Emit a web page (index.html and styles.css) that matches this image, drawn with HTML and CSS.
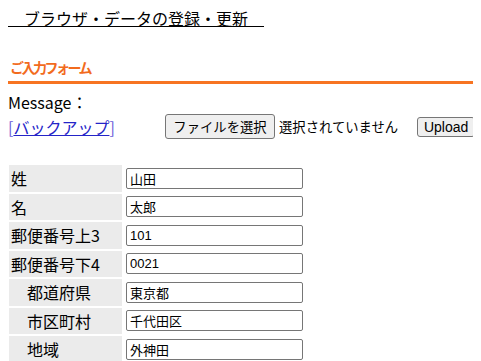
FILE: index.html
```html
<!DOCTYPE html>
<html lang="ja">
<head>
    <meta charset="UTF-8">
    <title>ブラウザ・データの登録・更新</title>
    <link rel="stylesheet" href="styles.css">
</head>
<body>

<p class="title">　ブラウザ・データの登録・更新　</p>

<div class="form-heading">ご入力フォーム</div>

<p class="message">Message：</p>

<div class="backup-row">
    <span class="backup-link"><span class="bracket">[</span><a href="#">バックアップ</a><span class="bracket">]</span></span>
    <button class="file-button" type="button">ファイルを選択</button>
    <span class="file-name">選択されていません</span>
    <button class="upload-button" type="button">Upload</button>
</div>

<table class="entry-table">
    <tr>
        <td class="label">姓</td>
        <td class="field"><input type="text" value="山田"></td>
    </tr>
    <tr>
        <td class="label">名</td>
        <td class="field"><input type="text" value="太郎"></td>
    </tr>
    <tr>
        <td class="label">郵便番号上3</td>
        <td class="field"><input type="text" value="101"></td>
    </tr>
    <tr>
        <td class="label">郵便番号下4</td>
        <td class="field"><input type="text" value="0021"></td>
    </tr>
    <tr>
        <td class="label">　都道府県</td>
        <td class="field"><input type="text" value="東京都"></td>
    </tr>
    <tr>
        <td class="label">　市区町村</td>
        <td class="field"><input type="text" value="千代田区"></td>
    </tr>
    <tr>
        <td class="label">　地域</td>
        <td class="field"><input type="text" value="外神田"></td>
    </tr>
</table>

</body>
</html>
```

FILE: styles.css
```css
body {
    margin: 8px;
    font-family: "Noto Sans CJK JP", "Noto Sans", sans-serif;
    font-size: 16px;
    color: #000;
    background-color: #fff;
}

.title {
    margin: 0;
    line-height: 20px;
    text-decoration: underline;
    text-underline-offset: 1px;
}

.form-heading {
    margin: 29px -8px 0 -1px;
    padding: 0 0 4px 3px;
    font-size: 14px;
    font-weight: bold;
    line-height: 20px;
    letter-spacing: -2.5px;
    color: #f26b1d;
    border-bottom: 3px solid #f77422;
}

.message {
    margin: 6px 0 0;
    line-height: 24px;
}

.backup-row {
    display: flex;
    align-items: center;
    height: 25px;
    margin-right: -30px;
}

.backup-row > * {
    flex-shrink: 0;
}

.backup-link {
    width: 157px;
    line-height: 24px;
}

.backup-link a {
    color: #2424c8;
}

.bracket {
    color: #6a5ad8;
}

.file-button {
    height: 25px;
    width: 110px;
    padding: 0 6px;
    font-family: "Noto Sans CJK JP", sans-serif;
    font-size: 13.33px;
    background-color: #efefef;
    border: 1px solid #767676;
    border-radius: 3px;
}

.file-name {
    margin-left: 4px;
    font-size: 13.33px;
}

.upload-button {
    margin-left: 19px;
    height: 20px;
    width: 58px;
    padding: 0;
    font-family: "Liberation Sans", Arial, sans-serif;
    font-size: 14px;
    background-color: #efefef;
    border: 1px solid #767676;
    border-radius: 3px;
}

.entry-table {
    margin-top: 24px;
    margin-left: -1px;
    border-spacing: 2px;
}

.entry-table td {
    height: 26.5px;
    padding: 0;
}

.label {
    width: 111px;
    padding-left: 2px !important;
    background-color: #ebebeb;
    line-height: 20px;
}

.field {
    padding-left: 2px !important;
}

.field input {
    display: block;
    box-sizing: border-box;
    width: 177px;
    height: 21px;
    margin: 0;
    padding: 1px 3px;
    font-family: "Liberation Sans", "Noto Sans CJK JP", sans-serif;
    font-size: 13px;
    border: 1px solid #767676;
    border-radius: 2px;
}
```
